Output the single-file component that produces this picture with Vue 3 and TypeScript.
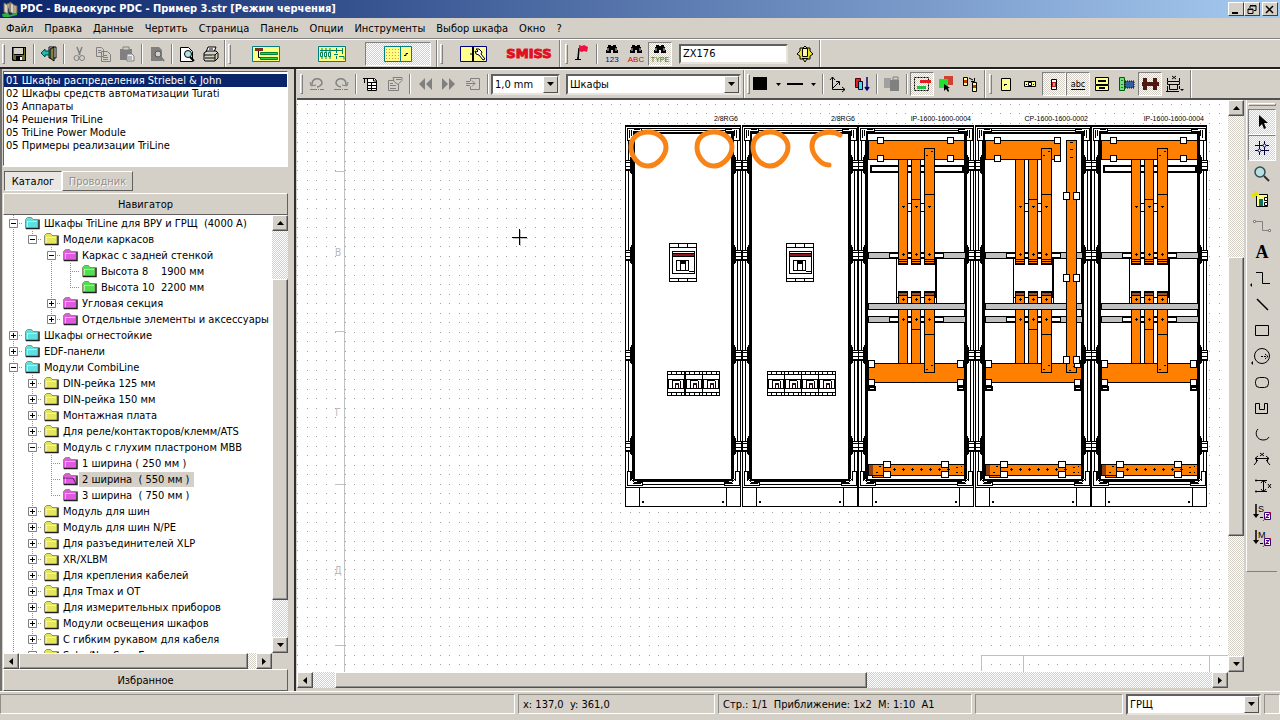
<script setup lang="ts">
import { ref } from 'vue'

interface Tool { id: string; label?: string; kind?: 'sep'; on?: boolean; off?: boolean; w?: number }
interface Node { text: string; guides: string; toggle?: string; color: string; open?: boolean; selected?: boolean }

const menus = ['Файл', 'Правка', 'Данные', 'Чертить', 'Страница', 'Панель', 'Опции', 'Инструменты', 'Выбор шкафа', 'Окно', '?']
const catalogs = [
  '01 Шкафы распределения Striebel & John',
  '02 Шкафы средств автоматизации Turati',
  '03 Аппараты',
  '04 Решения TriLine',
  '05 TriLine Power Module',
  '05 Примеры реализации TriLine',
]
const activeCatalog = ref(0)
const searchText = ref('ZX176')

const C = '#5fe0e0', Y = '#e6e65a', P = '#e05ae0', G = '#4fe04f'
const nodes: Node[] = [
  { text: 'Шкафы TriLine для ВРУ и ГРЩ  (4000 А)', guides: 'T', toggle: '-', color: C },
  { text: 'Модели каркасов', guides: 'IL', toggle: '-', color: Y },
  { text: 'Каркас с задней стенкой', guides: 'I T', toggle: '-', color: P },
  { text: 'Высота 8    1900 мм', guides: 'I IT', color: G },
  { text: 'Высота 10  2200 мм', guides: 'I IL', color: G },
  { text: 'Угловая секция', guides: 'I T', toggle: '+', color: P },
  { text: 'Отдельные элементы и аксессуары', guides: 'I L', toggle: '+', color: P },
  { text: 'Шкафы огнестойкие', guides: 'T', toggle: '+', color: C },
  { text: 'EDF-панели', guides: 'T', toggle: '+', color: C },
  { text: 'Модули CombiLine', guides: 'T', toggle: '-', color: C },
  { text: 'DIN-рейка 125 мм', guides: 'IT', toggle: '+', color: Y },
  { text: 'DIN-рейка 150 мм', guides: 'IT', toggle: '+', color: Y },
  { text: 'Монтажная плата', guides: 'IT', toggle: '+', color: Y },
  { text: 'Для реле/контакторов/клемм/ATS', guides: 'IT', toggle: '+', color: Y },
  { text: 'Модуль с глухим пластроном МВВ', guides: 'IT', toggle: '-', color: Y },
  { text: '1 ширина ( 250 мм )', guides: 'IIT', color: P },
  { text: '2 ширина  ( 550 мм )', guides: 'IIT', color: P, open: true, selected: true },
  { text: '3 ширина  ( 750 мм )', guides: 'IIL', color: P },
  { text: 'Модуль для шин', guides: 'IT', toggle: '+', color: Y },
  { text: 'Модуль для шин N/PE', guides: 'IT', toggle: '+', color: Y },
  { text: 'Для разъединителей XLP', guides: 'IT', toggle: '+', color: Y },
  { text: 'XR/XLBM', guides: 'IT', toggle: '+', color: Y },
  { text: 'Для крепления кабелей', guides: 'IT', toggle: '+', color: Y },
  { text: 'Для Tmax и OT', guides: 'IT', toggle: '+', color: Y },
  { text: 'Для измерительных приборов', guides: 'IT', toggle: '+', color: Y },
  { text: 'Модули освещения шкафов', guides: 'IT', toggle: '+', color: Y },
  { text: 'С гибким рукавом для кабеля', guides: 'IT', toggle: '+', color: Y },
  { text: 'Solar/NewSun, Europa', guides: 'IT', toggle: '+', color: Y },
]

const sep: Tool = { id: '', kind: 'sep' }
const fileTools: Tool[] = [
  { id: 'save', label: 'Сохранить' }, sep, { id: 'exit', label: 'Выход' }, sep,
  { id: 'cut', label: 'Вырезать', off: true }, { id: 'copy', label: 'Копировать', off: true }, { id: 'paste', label: 'Вставить', off: true }, sep,
  { id: 'find', label: 'Найти', off: true }, sep, { id: 'preview', label: 'Просмотр' }, { id: 'print', label: 'Печать' },
]
const modeTools: Tool[] = [
  { id: 'tree', label: 'Структура', w: 28 }, { id: 'scheme', label: 'Схема', w: 28 }, { id: 'layout', label: 'Компоновка', w: 28, on: true },
]
const findTools: Tool[] = [
  { id: 'flag', label: 'Флаг' }, sep,
  { id: 'f123', label: 'Поиск по номеру' }, { id: 'fabc', label: 'Поиск по тексту' }, { id: 'ftype', label: 'Поиск по типу', on: true },
]
const editTools: Tool[] = [
  { id: 'undo', label: 'Отменить', off: true }, { id: 'redo', label: 'Повторить', off: true }, sep,
  { id: 'newdoc', label: 'Новый лист' }, { id: 'props', label: 'Свойства', off: true }, sep,
  { id: 'prev', label: 'Назад', off: true }, { id: 'next', label: 'Вперёд', off: true }, { id: 'goto', label: 'Перейти', off: true },
]
const lineTools: Tool[] = [
  { id: 'axes', label: 'Оси' }, { id: 'order', label: 'Порядок' }, sep, { id: 'group', label: 'Группа', off: true }, sep,
  { id: 'select', label: 'Выделение', on: true }, { id: 'pick', label: 'Указать' }, { id: 'replace', label: 'Заменить' },
]
const viewTools: Tool[] = [
  { id: 'door', label: 'Дверь' }, { id: 'plate', label: 'Панель' }, { id: 'device', label: 'Аппарат', on: true }, { id: 'abc', label: 'Текст', on: true },
  { id: 'cover', label: 'Крышка' }, { id: 'section', label: 'Разрез' }, { id: 'bus', label: 'Шины', on: true }, { id: 'dims', label: 'Размеры' },
]
const drawTools: Tool[] = [
  { id: 'arrow', label: 'Выбор', on: true }, { id: 'grid', label: 'Сетка', on: true }, { id: 'zoom', label: 'Масштаб' }, { id: 'insert', label: 'Вставка' },
  { id: 'poly', label: 'Соединение', off: true }, { id: 'text', label: 'Текст' }, { id: 'step', label: 'Ломаная' }, { id: 'line', label: 'Линия' },
  { id: 'rect', label: 'Прямоугольник' }, { id: 'circle', label: 'Окружность' }, { id: 'round', label: 'Скругление' }, { id: 'ushape', label: 'Многоугольник' },
  { id: 'arc', label: 'Дуга' }, { id: 'dimh', label: 'Размер по X' }, { id: 'dimv', label: 'Размер по Y' }, { id: 'sortS', label: 'Уровень S' }, { id: 'sortM', label: 'Уровень M' },
]

const binocular = '<path d="M4 0h3v1h2V0h3v2h1v3h1v3H9V5H7v3H2V5h1V2h1z" fill="#000"/><path d="M4 3v3M12 3v3" stroke="#d4d0c8"/>'
const label = (t: string, c: string) => `<text x="8" y="17" font-size="8" text-anchor="middle" font-family="Liberation Sans" fill="${c}">${t}</text>`
const icons: Record<string, string> = {
  save: '<path d="M1 1h14v14H2l-1-1z" fill="#000"/><path d="M3 2h9v6H3z" fill="#d4d0c8"/><path d="M2 2h1v7h10V2h1v12h-3v-4H5v4H3l-1-1z" fill="#6e6c2c"/><path d="M9 11h2v3H9z" fill="#fff"/>',
  exit: '<path d="M8 1h7v11H8z" fill="#fff" stroke="#000"/><path d="M9 3l4-2v14l-4-3z" fill="#808040" stroke="#000"/><path d="M0 7l4-4v2h4v4H4v2z" fill="#20b8b0" stroke="#004848"/>',
  cut: '<path d="M6 1l3 8M11 1L8 9" stroke="#808080" fill="none" stroke-width="1.5"/><circle cx="5.500" cy="12" r="2.500" fill="none" stroke="#808080"/><circle cx="11" cy="12" r="2.500" fill="none" stroke="#808080"/>',
  copy: '<path d="M1.500 1.500h5l2 2v7h-7zM6.500 5.500h6l3 3v7h-9z" fill="#d4d0c8" stroke="#808080"/><path d="M3 4.500h3M3 6.500h3M8 9.500h4M8 11.500h5M8 13.500h5" stroke="#808080"/>',
  paste: '<path d="M1 3h12v11H1z" fill="#808080"/><path d="M4 1h6v3H4z" fill="#d4d0c8" stroke="#808080"/><path d="M8 8h5l2 2v5H8z" fill="#eee" stroke="#808080"/><path d="M9 11h4M9 13h4" stroke="#808080"/>',
  find: '<path d="M2 1h8l3 3v11H2z" fill="#808080"/><circle cx="9" cy="8" r="3" fill="#d4d0c8" stroke="#555"/><path d="M11 10l4 5" stroke="#777" stroke-width="2"/>',
  preview: '<path d="M1.500 1.500h8l4 4v10h-12z" fill="#fff" stroke="#000"/><circle cx="9" cy="8" r="3.500" fill="#b0e8e8" stroke="#000"/><path d="M11 11l4 4" stroke="#000" stroke-width="2"/>',
  print: '<path d="M5 1h8l-2 5H3z" fill="#fff" stroke="#000"/><path d="M1 7l3-2h9l2 2v5l-3 3H2l-1-1z" fill="#d4d0c8" stroke="#000"/><path d="M1 9h11l3-3M2 12h10M12 9v6M6 3h4" stroke="#000" fill="none"/><path d="M9 10h2" stroke="#e0d000"/>',
  tree: '<path d="M.5 .5h27v15H.5z" fill="#ffff80" stroke="#008080"/><path d="M3 2h8v3H3z" fill="#803020"/><path d="M6.500 5v6.500H9" stroke="#000" fill="none"/><path d="M8.500 6.500h17v2h-17zM8.500 11.500h17v2h-17z" fill="#30d040" stroke="#008030"/>',
  scheme: '<path d="M.5 .5h27v15H.5z" fill="#ffff80" stroke="#008080"/><path d="M2 4.500h22M4 2v11M8 2v11M12 2v11M16 8.500h4M18.500 2v5M18.500 10v3M24.500 2v6" stroke="#008060" fill="none"/><path d="M2.500 6.500h2v4h-2zM6.500 6.500h2v4h-2zM10.500 6.500h2v4h-2z" fill="#ffff80" stroke="#008060"/><path d="M21 10.500h5v3" stroke="#008060" fill="none"/>',
  layout: '<path d="M.5 .5h27v15H.5zM16.500 0v16" fill="#ffff80" stroke="#008080"/><path d="M2 3.500h13M2 6.500h13M2 9.500h13M2 12.500h13" stroke="#e09040" stroke-dasharray="1 2"/><path d="M20 9.500h2v-2h2" stroke="#000" fill="none"/>',
  wrench: '<path d="M.5 .5h26v15H.5z" fill="#ffff90" stroke="#000080"/><path d="M13 1v14" stroke="#000" stroke-width="2"/><path d="M16 3l3 0 3 3-1 2 4 5-2 1-4-5-3-1-1-3 2 1 1-1zM10 8h3" fill="#fff" stroke="#000"/>',
  flag: '<path d="M5 3L4 14" stroke="#000" stroke-width="1.500"/><path d="M1 14.500h6M3 13h2" stroke="#000"/><path d="M5 0l3 1 2-1 4 2-1 5-3-1-2 1-3-1z" fill="#f01040"/>',
  f123: binocular + label('123', '#0000c0'),
  fabc: binocular + label('ABC', '#e00000'),
  ftype: binocular + '<text x="8" y="17" font-size="7" text-anchor="middle" font-family="Liberation Sans" fill="#008000">TYPE</text>',
  lamp: '<path d="M8 0l2 2 3 0 0 3 3 3-3 2 0 3-3 0-2 3-2-3-3 0 0-3-3-2 3-3 0-3 3 0z" fill="#e8e030" stroke="#000"/><path d="M5.500 2.500h5v8h-5z" fill="#fff8a0" stroke="#000"/><path d="M5 12.500h6" stroke="#000"/>',
  undo: '<path d="M3 9c-1-8 10-8 10-2 0 2-3 4-5 4" fill="none" stroke="#808080" stroke-width="1.500"/><path d="M1 6l1 4 5-1" stroke="#808080" fill="none"/><path d="M1 13.500h14" stroke="#808080" stroke-dasharray="7 1 1 1"/>',
  redo: '<path d="M13 9c1-8-10-8-10-2 0 2 3 4 5 4" fill="none" stroke="#808080" stroke-width="1.500"/><path d="M15 6l-1 4-5-1" stroke="#808080" fill="none"/><path d="M1 13.500h14" stroke="#808080" stroke-dasharray="7 1 1 1"/>',
  newdoc: '<path d="M4.500 2.500h7l2 2v10h-9z" fill="#fff" stroke="#000"/><path d="M5 6.500h8M5 9.500h8M5 12.500h8M8.500 6v8M1.500 2v5M0 2.500h5M10.500 2v3h3" stroke="#000" fill="none"/>',
  props: '<path d="M1.500 4.500h10v10h-10z" fill="#d4d0c8" stroke="#808080"/><path d="M6 1.500h9v3l-4 4-4-3z" fill="#d4d0c8" stroke="#808080"/><path d="M3 7.500h3M3 9.500h6M3 12.500h6M9 3.500h5" stroke="#808080"/>',
  prev: '<path d="M8 2v12L2 8zM15 2v12L9 8z" fill="#808080"/>',
  next: '<path d="M1 2v12l6-6zM8 2v12l6-6z" fill="#808080"/>',
  goto: '<path d="M5.500 5V2.500h9v11h-9v-3" fill="none" stroke="#808080"/><path d="M1 7.500h9M7 4.500l3 3-3 3M1 5.500h4M1 9.500h4" fill="none" stroke="#808080"/>',
  axes: '<path d="M2.500 1v12.500H15M0 4l2.500-3L5 4M12 11l3 2.500-3 2.500M2 13L9 6M9.500 9V5.500H6" fill="none" stroke="#000"/>',
  order: '<path d="M1.500 2.500h5v9h-5z" fill="#e02020" stroke="#500"/><path d="M4.500 5.500h4v8h-4z" fill="#40e0e0" stroke="#003"/><path d="M13 1v12M11 11l2 3 2-3" stroke="#000080" fill="#000080" stroke-width="1.500"/>',
  group: '<path d="M0 2h7v10H0z" fill="#a0a0a0"/><path d="M6 4h9v11H6z" fill="#808080"/><path d="M9 1h5v3H9z" fill="#d4d0c8" stroke="#808080"/>',
  select: '<path d="M.5 1.500h14v13H.5z" fill="none" stroke="#000" stroke-dasharray="2 1"/><path d="M6 4h11v3H6z" fill="#e02020"/><path d="M3 10h9v3H3z" fill="#20c040"/>',
  pick: '<path d="M6 0h9v9H6z" fill="#d04030"/><path d="M1 3h9v9H1z" fill="#20e030"/><path d="M6 8v7l2-2 2 3 1-1-1-3h2z" fill="#000"/>',
  replace: '<path d="M1.500 1.500h4v8h-4z" fill="#ffffa0" stroke="#000"/><path d="M2 4h3v3H2z" fill="#c04000"/><path d="M10.500 6.500h4v9h-4z" fill="#ffffa0" stroke="#000"/><path d="M11 9h3v3h-3z" fill="#b04020"/><path d="M7 2l4 2M9 5.500h3.500V2" stroke="#000" fill="none"/>',
  door: '<path d="M3.500 2.500h9v12h-9z" fill="#ffff90" stroke="#000"/><path d="M6 8.500h3M6.500 8v2" stroke="#000"/>',
  plate: '<path d="M2.500 5.500h11v5h-11z" fill="#ffff90" stroke="#000"/><path d="M6.500 6.500h3v3h-3z" fill="#fff" stroke="#000"/><path d="M4 8.500h1M11 8.500h1" stroke="#000"/>',
  device: '<path d="M5.500 3.500h5v10h-5z" fill="#fff" stroke="#000"/><path d="M6 6h4v5H6z" fill="#c02010"/><path d="M8 7v3" stroke="#fff"/>',
  abc: '<text x="8" y="11" text-anchor="middle" font-size="9" font-family="DejaVu Sans Condensed, DejaVu Sans">abc</text><path d="M1 13.500h14" stroke="#000"/>',
  cover: '<path d="M1.500 1.500h13v7h-13zM1.500 9.500h13v5h-13z" fill="#ffff90" stroke="#000"/><path d="M4 5h8M5 12h6" stroke="#000" stroke-width="2"/>',
  section: '<path d="M1.500 1.500h5v13h-5z" fill="#70e080" stroke="#006000"/><path d="M4 4v1M4 8v1M4 11v1" stroke="#000"/><path d="M7 5h9v7H7z" fill="#3060a0" stroke="#000" stroke-dasharray="1 1"/>',
  bus: '<path d="M1 2h4v12H1zM11 2h4v12h-4zM0 6h17v4H0z" fill="#501810"/>',
  dims: '<path d="M1.500 5.500h12v3h-12zM3.500 8.500h8v5h-8z" fill="none" stroke="#000"/><path d="M0 15.500h13M6 0l4 3M10 0L6 3M1.500 2v3M13.500 2v3M1.500 10v6M13.500 10v3" stroke="#000"/><path d="M14 13h4l-2 2z"/>',
  arrow: '<path d="M5 1v12l3-3 2 5 2-1-2-5h4z" fill="#000"/>',
  grid: '<path d="M5.500 1v14M10.500 1v14M1 5.500h14M1 10.500h14" stroke="#000040"/><circle cx="10.500" cy="5.500" r="1.500" fill="#fff" stroke="#000080"/><circle cx="5.500" cy="10.500" r="1.500" fill="#fff" stroke="#000080"/>',
  zoom: '<circle cx="6" cy="6" r="5" fill="#b8e0e0" stroke="#305050" stroke-width="1.500"/><path d="M10 10l5 5" stroke="#303030" stroke-width="2"/>',
  insert: '<path d="M2.500 2.500h11v12h-11z" fill="#ffff90" stroke="#000"/><path d="M5 7h4v7H5z" fill="#107060"/><path d="M10.500 5.500h3v3h-3zM10.500 10.500h3v3h-3z" fill="#fff" stroke="#000"/><path d="M1 -1v7M-2 2.500h7M-2 -1l6 6M4 -1l-6 6" stroke="#e0e000"/>',
  poly: '<path d="M2 3.500h6.500v9H14" fill="none" stroke="#808080"/><path d="M-.5 2.500h2v2h-2zM14.500 11.500h2v2h-2z" fill="#fff" stroke="#808080"/>',
  text: '<text x="8" y="14" text-anchor="middle" font-size="18" font-weight="bold" font-family="Liberation Serif">A</text>',
  step: '<path d="M2 2.500h6.500v11H16" fill="none" stroke="#000"/><path d="M-4 15l2-2v4z"/>',
  line: '<path d="M3 3l11 11" stroke="#000" stroke-width="1.500"/>',
  rect: '<path d="M1.500 3.500h13v10h-13z" fill="none" stroke="#000"/>',
  circle: '<circle cx="8" cy="8" r="7.500" fill="none" stroke="#000"/><path d="M7 8.500h7M11 6l3 2.500-3 2.500" fill="none" stroke="#000" stroke-dasharray="2 1"/><path d="M-3 15l2-2v4z"/>',
  round: '<rect x="1.500" y="3.500" width="13" height="10" rx="4" fill="none" stroke="#000"/>',
  ushape: '<path d="M1.500 3.500h4v6h5v-6h3v10h-12z" fill="none" stroke="#000"/>',
  arc: '<path d="M4 3c-4 4-1 11 5 11 3 0 5-1 6-3" fill="none" stroke="#000"/>',
  dimh: '<path d="M1 6.500h14M2.500 6v4L0 13M13.500 6v4L16 13M4 4L1 6.500 4 9M12 4l3 2.500L12 9M6 1l4 3M10 1L6 4" fill="none" stroke="#000"/>',
  dimv: '<path d="M2 2.500h11M2 13.500h11M9.500 2v12M7 5l2.500-3L12 5M7 11l2.500 3 2.500-3M14 6l3 4M17 6l-3 4" fill="none" stroke="#000"/><circle cx="2" cy="2.500" r="1"/><circle cx="2" cy="13.500" r="1"/>',
  sortS: '<path d="M2 0v11" stroke="#000" stroke-width="1.500"/><path d="M-1 10h6l-3 4zM6 13h3v1H6z"/><text x="4" y="8" font-size="9" font-family="Liberation Sans">S</text><path d="M10.500 8.500h6v7h-6z" fill="#fff" stroke="#400080"/><path d="M9 17L17 8" stroke="#e02020"/><path d="M12 10.500h3l-3 3h3" stroke="#400080" fill="none"/>',
  sortM: '<path d="M2 0v11" stroke="#000" stroke-width="1.500"/><path d="M-1 10h6l-3 4zM6 13h3v1H6z"/><text x="4" y="8" font-size="9" font-family="Liberation Sans">M</text><path d="M10.500 8.500h6v7h-6z" fill="#fff" stroke="#400080"/><path d="M9 17L17 8" stroke="#e02020"/><path d="M12 10.500h3l-3 3h3" stroke="#400080" fill="none"/>',
}

interface Cabinet { x: number; code: string; kind: 'breakers' | 'bus'; modules?: number[]; extra?: boolean }
const cabinets: Cabinet[] = [
  { x: 625, code: '2/8RG6', kind: 'breakers', modules: [42, 60, 77] },
  { x: 742, code: '2/8RG6', kind: 'breakers', modules: [25, 42, 59, 76] },
  { x: 858, code: 'IP-1600-1600-0004', kind: 'bus' },
  { x: 975, code: 'CP-1600-1600-0002', kind: 'bus', extra: true },
  { x: 1091, code: 'IP-1600-1600-0004', kind: 'bus' },
]
const clampRows = [157, 247, 347, 438]
const bars = [{ x: 40, top: 159, bottom: 363, w: 10 }, { x: 53, top: 159, bottom: 363, w: 10 }, { x: 66, top: 148, bottom: 372, w: 11 }]
const sheetRows = [{ y: 252, t: 'В' }, { y: 412, t: 'Г' }, { y: 570, t: 'Д' }]

const gridStep = 9.5
const gridDots = Array.from({ length: 64 }, (_, row) =>
  Array.from({ length: 160 }, (_, col) => `M${Math.round(297.3 + col * gridStep)} ${Math.round(103.6 + row * gridStep)}h1v1h-1z`).join('')
).join('')
</script>

<template>
  <div class="window">
    <header class="title">
      <svg class="logo" width="16" height="16" viewBox="0 0 16 16" aria-hidden="true">
        <path d="M2 2l4 2v9l-4-2zM8 1l4 3v9l-4-2z" fill="#d8d0c0" stroke="#706850" /><path d="M5 3l3-1v9M12 4l3 1v7l-3 1" fill="#b8a888" stroke="#706850" /><path d="M0 13l5-1 3 2 7-2v2l-8 2H1z" fill="#30b040" />
      </svg>
      <h1>PDC - Видеокурс PDC - Пример 3.str [Режим черчения]</h1>
      <div class="win-buttons">
        <button aria-label="Свернуть"><svg width="10" height="9"><path d="M1 7h6v2H1z" /></svg></button>
        <button aria-label="Восстановить"><svg width="10" height="9"><path d="M3 1h6M3 0.500h6v5H7M3 1v2M1 4h5v4.500H1zM1 4.500h5" fill="none" stroke="#000" /></svg></button>
        <button class="close" aria-label="Закрыть"><svg width="10" height="9"><path d="M1 1l7 7M8 1L1 8" stroke="#000" stroke-width="1.500" /></svg></button>
      </div>
    </header>

    <nav class="menu"><button v-for="m in menus" :key="m">{{ m }}</button></nav>

    <div class="toolbar">
      <div class="band file-band">
        <i class="grip"></i>
        <template v-for="(t, i) in fileTools" :key="i">
          <i v-if="t.kind" class="sep"></i>
          <button v-else class="tool" :class="{ on: t.on }" :disabled="t.off" :aria-label="t.label"><svg width="16" height="16" v-html="icons[t.id]" /></button>
        </template>
      </div>
      <div class="band mode-band">
        <i class="grip"></i>
        <button v-for="t in modeTools" :key="t.id" class="tool mode" :class="{ on: t.on }" :aria-label="t.label"><svg width="28" height="16" v-html="icons[t.id]" /></button>
      </div>
      <div class="band smiss-band">
        <i class="grip"></i>
        <button class="tool wide" aria-label="Настройка"><svg width="27" height="16" v-html="icons.wrench" /></button>
        <button class="tool wide smiss">SMISS</button>
      </div>
      <div class="band find-band">
        <i class="grip"></i>
        <template v-for="(t, i) in findTools" :key="i">
          <i v-if="t.kind" class="sep"></i>
          <button v-else class="tool" :class="{ on: t.on }" :aria-label="t.label"><svg width="16" height="18" v-html="icons[t.id]" /></button>
        </template>
        <input v-model="searchText" class="search" aria-label="Поиск">
        <button class="tool" aria-label="Искать"><svg width="16" height="16" v-html="icons.lamp" /></button>
      </div>
    </div>

    <main class="work">
      <aside class="side">
        <ul class="catalogs">
          <li v-for="(c, i) in catalogs" :key="c"><button :class="{ active: i === activeCatalog }" @click="activeCatalog = i">{{ c }}</button></li>
        </ul>
        <div class="tabs"><button class="current">Каталог</button><button disabled>Проводник</button></div>
        <button class="heading">Навигатор</button>
        <div class="tree-area">
          <ul class="tree">
            <li v-for="n in nodes" :key="n.text" :class="{ selected: n.selected }">
              <i v-for="(g, i) in n.guides.split('')" :key="i" class="guide" :class="{ full: g === 'I' || g === 'T', half: g === 'L', arm: g === 'T' || g === 'L' }">
                <button v-if="n.toggle && i === n.guides.length - 1" class="toggle" aria-label="Развернуть">
                  <svg width="9" height="9"><path d="M.5 .5h8v8h-8z" fill="#fff" stroke="#808080" /><path :d="n.toggle === '+' ? 'M2 4.500h5M4.500 2v5' : 'M2 4.500h5'" stroke="#000" /></svg>
                </button>
              </i>
              <svg class="folder" width="16" height="14" aria-hidden="true">
                <path d="M1.500 12.500v-9l2-2h4l1.500 2h5v9z" :fill="n.color" stroke="#909070" /><path d="M3 5.500h10M3.500 5v6" stroke="#fff" opacity=".5" fill="none" /><path d="M2 12.500h13v-9" stroke="#202020" fill="none" stroke-width="1.500" />
                <path v-if="n.open" d="M1 6h10l3 6" stroke="#502050" fill="none" />
              </svg>
              <span>{{ n.text }}</span>
            </li>
          </ul>
          <div class="vscroll side-v">
            <button aria-label="Вверх"><svg width="7" height="4"><path d="M3.500 0L7 4H0z" /></svg></button>
            <i class="before"></i><i class="thumb"></i><i class="after"></i>
            <button aria-label="Вниз"><svg width="7" height="4"><path d="M0 0h7L3.500 4z" /></svg></button>
          </div>
        </div>
        <div class="hscroll side-h">
          <button aria-label="Влево"><svg width="4" height="7"><path d="M4 0v7L0 3.500z" /></svg></button>
          <i class="thumb"></i><i class="after"></i>
          <button aria-label="Вправо"><svg width="4" height="7"><path d="M0 0l4 3.500L0 7z" /></svg></button>
          <i class="corner"></i>
        </div>
        <button class="heading favourites">Избранное</button>
      </aside>

      <section class="editor">
        <div class="toolbar format">
          <div class="band">
            <i class="grip"></i>
            <template v-for="(t, i) in editTools" :key="i">
              <i v-if="t.kind" class="sep"></i>
              <button v-else class="tool" :disabled="t.off" :aria-label="t.label"><svg width="16" height="16" v-html="icons[t.id]" /></button>
            </template>
            <i class="sep"></i>
            <span class="combo width-combo"><select aria-label="Толщина линии"><option>1,0 mm</option></select><i><svg width="7" height="4"><path d="M0 0h7L3.500 4z" /></svg></i></span>
            <span class="combo layer-combo"><select aria-label="Слой"><option>Шкафы</option></select><i><svg width="7" height="4"><path d="M0 0h7L3.500 4z" /></svg></i></span>
          </div>
          <div class="band">
            <i class="grip"></i>
            <button class="tool swatch" aria-label="Цвет"><svg width="32" height="14"><path d="M0 0h14v13H0zM23 6h5l-2.500 3z" /></svg></button>
            <button class="tool swatch" aria-label="Тип линии"><svg width="32" height="14"><path d="M0 6h16v2H0zM24 6h5l-2.500 3z" /></svg></button>
            <i class="sep"></i>
            <template v-for="(t, i) in lineTools" :key="i">
              <i v-if="t.kind" class="sep"></i>
              <button v-else class="tool" :class="{ on: t.on }" :disabled="t.off" :aria-label="t.label"><svg width="16" height="16" v-html="icons[t.id]" /></button>
            </template>
          </div>
          <div class="band view-band">
            <i class="grip"></i>
            <button v-for="t in viewTools" :key="t.id" class="tool" :class="{ on: t.on }" :aria-label="t.label"><svg width="16" height="16" v-html="icons[t.id]" /></button>
          </div>
        </div>

        <div class="editor-body">
          <div class="canvas-col">
            <div class="canvas-row">
              <svg class="canvas" role="img" aria-label="Чертёж шкафов">
                <g transform="translate(-297 -100)">
                  <path :d="gridDots" fill="#a0a0a0" shape-rendering="crispEdges" />
                  <path d="M344.500 100v3000M335 171.500h9M335 331.500h9M335 484.500h9M335 645.500h9" stroke="#c0c0c0" fill="none" />
                  <g fill="#b8b8b8" font-size="10" text-anchor="middle"><text v-for="r in sheetRows" :key="r.t" x="338" :y="r.y + 4">{{ r.t }}</text></g>
                  <path d="M981.500 671v-15.500h247M1023.500 656v16M1209.500 656v16" stroke="#c0c0c0" fill="none" />

                  <g v-for="c in cabinets" :key="c.x">
                    <text :x="c.x + 113" y="121" font-size="7" text-anchor="end" font-family="Liberation Sans" class="code">{{ c.code }}</text>
                    <g :transform="`translate(${c.x} 0)`" fill="none" stroke="#000" shape-rendering="crispEdges">
                      <path d="M.5 125.500h115v381H.5z" fill="#fff" />
                      <path d="M0 126h116M8 133h100" stroke-width="2" />
                      <path d="M3 128.500h110M12 130.500h92M.5 487.500h115M12 481.500h92M3 484.500h110M3.500 128v356M112.500 128v356" />
                      <path d="M8.500 133v346M107.500 133v346" stroke-width="3" />
                      <path d="M8 479.500h100" stroke-width="2" />
                      <path d="M2 140v-12h14v3h-8v9zM114 140v-12h-14v3h8v9zM2 471v14h15v-3H9l-3-3v-8zM114 471v14H99v-3h8l3-3v-8z" fill="#fff" />
                      <path d="M4.500 130v8M6.500 130v6M9 129.500h6M111.500 130v8M109.500 130v6M107 129.500h-6M5.500 472v9M8 483.500h8M110.500 472v9M108 483.500h-8" />
                      <g v-for="y in clampRows" :key="y" :transform="`translate(0 ${y})`">
                        <path d="M0 3h8v10H0zM108 3h8v10h-8z" fill="#fff" /><path d="M0 3.500h8M0 5.500h9M0 9.500h9M0 12.500h8M6.500 -2v4M6.500 13v4M116 3.500h-8M116 5.500h-9M116 9.500h-9M116 12.500h-8M109.500 -2v4M109.500 13v4M5.500 0v16M110.500 0v16" />
                        <path d="M7.500 2v13M108.500 2v13" stroke-width="3" />
                      </g>
                      <path d="M14.500 487v19M101.500 487v19" /><path d="M17 501h2v2h-2zM97 501h2v2h-2z" fill="#000" stroke="none" />

                      <template v-if="c.kind === 'breakers'">
                        <g transform="translate(44 243)">
                          <path d="M.5 .5h27v38H.5zM0 4.500h28M0 35.500h28M3.500 8.500h22v22h-22zM7.500 17.500h12v10h-12zM11.500 18.500h5v9h-5zM9.500 0v4M18.500 0v4M9.500 35v4M18.500 35v4M20 28.500h5M25 20v11" fill="#fff" />
                          <path d="M4 12h21" stroke="#901818" stroke-width="2" /><path d="M4 10.500h21M4 13.500h21" /><path d="M12 19.500h4" stroke-width="2" />
                        </g>
                        <g v-for="(m, i) in c.modules" :key="m" :transform="`translate(${m} 371)`">
                          <path d="M.5 .5h17v24H.5zM0 3.500h18M0 8.500h18M0 17.500h18M0 21.500h18M4.500 0v3M9.500 0v3M14.500 0v3M4.500 22v3M9.500 22v3M14.500 22v3" fill="#fff" />
                          <path d="M1.500 9v8M16.500 9v8M5.500 9v8M8.500 12v5h3v-5M13.500 10v7M5 9.500h8" /><path d="M8 12.500h4" stroke-width="2" stroke="#301010" /><path v-if="i" d="M0 8v10" stroke-width="2" />
                        </g>
                      </template>

                      <template v-else>
                        <g fill="#c0c0c0"><path d="M10.500 252.500h97v6h-97zM10.500 316.500h97v6h-97z" /></g>
                        <g fill="#fff"><path d="M31 253.500h54v4H31zM31 317.500h54v4H31zM38.500 258.500h40v39h-40zM38.500 297.500v6M78.500 297.500v6M45.500 203.500h26v8h-26z" /><path d="M78 258v40" stroke-width="2" /></g>
                        <rect v-if="!c.extra" x="13" y="166" width="92" height="6" fill="#fff" stroke-width="2" />
                        <g fill="#ff8000">
                          <path :d="`M10.500 140.500H${c.extra ? 85 : 106}v19H10.500z`" />
                          <path d="M10.500 363.500h96v19h-96zM10.500 464.500h96v11h-96zM14.500 464.500h11v13h-11z" />
                          <template v-for="b in bars" :key="b.x">
                            <rect :x="b.x + 0.5" :y="b.top + 0.5" :width="b.w - 1" :height="264 - b.top" />
                            <rect :x="b.x + 0.5" y="291.500" :width="b.w - 1" :height="b.bottom - 291" />
                            <path :d="`M${b.x} 259.500h${b.w}M${b.x} 261.500h${b.w}M${b.x} 263.500h${b.w}`" />
                            <rect :x="b.x + 0.5" y="292.500" :width="b.w - 1" height="3" fill="#a05020" />
                            <path :d="`M${b.x + 4} 206.500h3M${b.x + 5.5} 206v2M${b.x + 4} 254.500h3M${b.x + 5.5} 253v3M${b.x + 4} 299.500h3M${b.x + 5.5} 298v3M${b.x + 4} 319.500h3M${b.x + 5.5} 318v3`" />
                          </template>
                          <path d="M53 199.500h10M66 194.500h11M53 329.500h10M66 334.500h11M68 155.500h2M73 151.500h2M68 369.500h2M73 365.500h2" />
                          <path v-if="c.extra" d="M91.500 140.500h10v232h-10zM95 142.500h3M95 149.500h3M95 157.500h3M94 370.500h2M98 366.500h2" />
                        </g>
                        <path d="M10.500 303.500h97v6h-97z" fill="#c0c0c0" />
                        <rect v-if="c.extra" x="91.500" y="299.500" width="10" height="24" fill="#ff8000" stroke="none" /><path v-if="c.extra" d="M91.500 299v25M101.500 299v25" />
                        <path d="M11 465h4v10h-4z" fill="#904010" stroke="none" />
                        <path v-for="k in 7" :key="k" :d="`M${26 + k * 9} 469.500h3M${27.5 + k * 9} 468v3`" />
                        <path d="M18 472.500h2M21 466.500h2M98 467.500h2M103 466.500h1M103 472.500h1M98 472.500h2" />
                        <g fill="#fff">
                          <path d="M19.500 137.500h6v6h-6zM19.500 155.500h6v6h-6z" />
                          <path :transform="`translate(${c.extra ? 79 : 89} 0)`" d="M.5 137.500h6v6H.5zM.5 155.500h6v6H.5z" />
                          <path d="M10.500 360.500h6v7h-6zM99.500 360.500h6v7h-6zM10.500 379.500h6v6h-6zM99.500 379.500h6v6h-6zM25.500 461.500h7v6h-7zM25.500 471.500h7v6h-7zM83.500 461.500h7v6h-7zM83.500 471.500h7v6h-7z" />
                          <path d="M11 387h6v3h-6zM100 387h6v3h-6z" stroke-width="2" />
                          <path v-if="c.extra" d="M88.500 192.500h6v7h-6zM98.500 192.500h6v7h-6zM88.500 274.500h6v7h-6zM98.500 274.500h6v7h-6zM88.500 356.500h6v7h-6zM98.500 356.500h6v7h-6z" />
                        </g>
                      </template>
                    </g>
                  </g>

                  <g fill="none" stroke="#f88418" stroke-width="5" stroke-linecap="round">
                    <path v-for="x in [648, 714, 770]" :key="x" :d="`M${x} 132c10 0 18 7 18 15s-8 19-18 19-17-10-17-19 7-15 17-15z`" />
                    <path d="M840 135c-8-5-28-4-28 11 0 9 9 19 17 19" />
                  </g>
                  <path d="M512 237.500h15M519.500 229v16" stroke="#000" /><path d="M513 238.500h15M520.500 230v16" stroke="#000" opacity=".25" />
                </g>
              </svg>
              <div class="vscroll canvas-v">
                <button aria-label="Вверх"><svg width="7" height="4"><path d="M3.500 0L7 4H0z" /></svg></button>
                <i class="before"></i><i class="thumb"></i><i class="after"></i>
                <button aria-label="Вниз"><svg width="7" height="4"><path d="M0 0h7L3.500 4z" /></svg></button>
              </div>
            </div>
            <div class="hscroll canvas-h">
              <button aria-label="Влево"><svg width="4" height="7"><path d="M4 0v7L0 3.500z" /></svg></button>
              <i class="before"></i><i class="thumb"></i><i class="after"></i>
              <button aria-label="Вправо"><svg width="4" height="7"><path d="M0 0l4 3.500L0 7z" /></svg></button>
              <i class="corner"></i>
            </div>
          </div>
          <div class="palette">
            <div class="palette-tools">
              <i class="hgrip"></i>
              <button v-for="t in drawTools" :key="t.id" class="tool" :class="{ on: t.on }" :disabled="t.off" :aria-label="t.label"><svg width="16" height="16" v-html="icons[t.id]" /></button>
            </div>
          </div>
        </div>
      </section>
    </main>

    <footer class="status">
      <span class="cell grow"></span>
      <span class="cell coords">x: 137,0&nbsp; y: 361,0</span>
      <span class="cell page">Стр.: 1/1&nbsp; Приближение: 1x2&nbsp; М: 1:10&nbsp; A1</span>
      <span class="cell blank"></span>
      <span class="combo object-combo"><select aria-label="Щит"><option>ГРЩ</option></select><i><svg width="7" height="4"><path d="M0 0h7L3.500 4z" /></svg></i></span>
      <span class="cell tail"></span>
    </footer>
  </div>
</template>

<style>
html, body { margin: 0; background: #d4d0c8; }
</style>

<style scoped>
.window { height: 100vh; min-height: 480px; display: flex; flex-direction: column; background: #d4d0c8; color: #000; font: 11px/13px "DejaVu Sans Condensed", "DejaVu Sans", sans-serif; overflow: hidden; }
.window * { box-sizing: border-box; }
button, input, select { font: inherit; color: inherit; margin: 0; padding: 0; border: 0; background: none; border-radius: 0; }
button { display: flex; align-items: center; justify-content: center; }
svg { display: block; overflow: visible; flex: none; }
ul { list-style: none; margin: 0; padding: 0; }

.title { flex: none; height: 18px; display: flex; align-items: center; padding: 0 2px; background: linear-gradient(90deg, #0a246a, #a6caf0); }
.title h1 { flex: 1; margin: 0; padding-left: 2px; color: #fff; font: bold 11px/16px "DejaVu Sans Condensed", "DejaVu Sans", sans-serif; white-space: nowrap; }
.win-buttons { display: flex; }
.win-buttons button { width: 16px; height: 14px; background: #d4d0c8; border: 1px solid; border-color: #fff #404040 #404040 #fff; }
.win-buttons .close { margin-left: 2px; }

.menu { flex: none; height: 21px; display: flex; align-items: center; border-bottom: 1px solid #808080; padding-left: 6px; gap: 11px; }
.toolbar { flex: none; display: flex; height: 30px; border-top: 1px solid #fff; border-bottom: 2px solid #202020; }
.band { flex: none; display: flex; align-items: center; border-right: 1px solid #808080; box-shadow: 1px 0 #fff; padding: 0 2px 0 3px; }
.grip { width: 3px; height: 20px; border: 1px solid; border-color: #fff #808080 #808080 #fff; margin-right: 2px; flex: none; }
.sep { width: 2px; height: 20px; margin: 0 2px; border-left: 1px solid #808080; border-right: 1px solid #fff; flex: none; }
.tool { width: 24px; height: 24px; flex: none; }
.tool.on { border: 1px solid; border-color: #808080 #fff #fff #808080; background: repeating-conic-gradient(#fff 0 25%, #d4d0c8 0 50%) 0 0 / 2px 2px; }
.tool.mode { width: 66px; }
.tool.wide { width: 56px; }
.tool.smiss { color: #e01020; font: bold 13px/20px "DejaVu Sans", sans-serif; -webkit-text-stroke: 1px #e01020; }
.file-band { padding: 0 1px 0 2px; }
.mode-band { padding-right: 5px; }
.find-band { padding-left: 5px; }
.search { width: 109px; height: 20px; margin: 0 5px 0 7px; padding: 0 2px; background: #fff; border: 2px solid; border-color: #606060 #e8e4dc #e8e4dc #606060; }

.work { flex: 1; min-height: 0; display: flex; }
.side { flex: none; width: 288px; margin-right: 6px; display: flex; flex-direction: column; border-left: 2px solid #707070; padding-left: 1px; }
.catalogs { flex: none; height: 95px; margin-top: 2px; padding-top: 2px; background: #fff; border: 1px solid; border-color: #606060 #fff #fff #606060; }
.catalogs button { width: 100%; height: 13px; padding-left: 2px; justify-content: flex-start; white-space: pre; }
.catalogs .active { background: #0a246a; color: #fff; }
.tabs { flex: none; display: flex; height: 27px; padding: 4px 1px 2px; border-top: 1px solid #fff; }
.tabs button { width: 71px; height: 20px; border: 1px solid; border-color: #fff #606060 #606060 #fff; }
.tabs .current { width: 58px; border-color: #606060 #fff #fff #606060; background: #e9e7e3; }
.tabs button:disabled { color: #909090; text-shadow: 1px 1px #fff; }
.heading { flex: none; height: 22px; background: #d4d0c8; border: 1px solid; border-color: #fff #606060 #606060 #fff; }
.tree-area { flex: 1; min-height: 0; display: flex; background: #fff; }
.tree { flex: 1; min-width: 0; overflow: hidden; padding-left: 1px; }
.tree li { height: 16px; display: flex; align-items: center; white-space: pre; }
.tree span { padding: 1px 5px 1px 3px; margin-left: 1px; }
.tree .selected span { background: #d4d0c8; }
.folder { margin-left: 1px; }
.guide { width: 19px; height: 16px; flex: none; display: flex; align-items: center; justify-content: center; background-repeat: no-repeat; }
.guide.full { background-image: repeating-linear-gradient(180deg, #909090 0 1px, transparent 1px 2px); background-size: 1px 16px; background-position: 9px 0; }
.guide.half { background-image: repeating-linear-gradient(180deg, #909090 0 1px, transparent 1px 2px); background-size: 1px 8px; background-position: 9px 0; }
.guide.arm.full { background-image: repeating-linear-gradient(180deg, #909090 0 1px, transparent 1px 2px), repeating-linear-gradient(90deg, #909090 0 1px, transparent 1px 2px); background-size: 1px 16px, 10px 1px; background-position: 9px 0, 9px 8px; }
.guide.arm.half { background-image: repeating-linear-gradient(180deg, #909090 0 1px, transparent 1px 2px), repeating-linear-gradient(90deg, #909090 0 1px, transparent 1px 2px); background-size: 1px 8px, 10px 1px; background-position: 9px 0, 9px 8px; }
.toggle { width: 9px; height: 9px; }

.vscroll, .hscroll { flex: none; display: flex; background: repeating-conic-gradient(#fff 0 25%, #d4d0c8 0 50%) 0 0 / 2px 2px; }
.vscroll { width: 16px; flex-direction: column; }
.hscroll { height: 16px; }
.vscroll button, .hscroll button, .thumb { flex: none; width: 16px; height: 16px; background: #d4d0c8; border: 1px solid; border-color: #fff #505050 #505050 #fff; box-shadow: inset -1px -1px #909090; }
.vscroll .thumb, .hscroll .thumb { width: auto; height: auto; }
.corner { width: 16px; background: #d4d0c8; }
.side-v .before { flex: 48; } .side-v .thumb { flex: 321; } .side-v .after { flex: 37; }
.side-h .thumb { flex: 229; } .side-h .after { flex: 8; }
.canvas-v .before { flex: 141; } .canvas-v .thumb { flex: 278; } .canvas-v .after { flex: 120; }
.canvas-h .before { flex: 22; } .canvas-h .thumb { flex: 531; } .canvas-h .after { flex: 346; }

.editor { flex: 1; min-width: 0; display: flex; flex-direction: column; border-left: 2px solid #303030; padding: 0 0 3px 1px; }
.format { height: 31px; border-bottom: 2px solid #505050; }
.combo { display: flex; background: #fff; border: 2px solid; border-color: #606060 #e8e4dc #e8e4dc #606060; height: 21px; flex: none; }
.combo select { flex: 1; min-width: 0; appearance: none; padding: 0 2px; outline: 0; }
.combo i { width: 15px; display: flex; align-items: center; justify-content: center; background: #d4d0c8; border: 1px solid; border-color: #fff #505050 #505050 #fff; }
.width-combo { width: 69px; }
.layer-combo { width: 175px; margin-left: 6px; }
.swatch { width: 34px; }
.view-band { padding: 0 4px; }
.editor-body { flex: 1; min-height: 0; display: flex; }
.canvas-col { flex: 1; min-width: 0; display: flex; flex-direction: column; }
.canvas-row { flex: 1; min-height: 0; display: flex; }
.canvas { flex: 1; min-width: 0; height: 100%; overflow: hidden; background: #fff; }
.code { fill: #000; }
.palette { flex: none; width: 36px; padding: 0 3px 0 2px; }
.palette-tools { display: flex; flex-direction: column; align-items: center; border-left: 1px solid #fff; border-bottom: 1px solid #808080; padding-bottom: 20px; }
.palette .tool { width: 28px; height: 26px; }
.hgrip { width: 28px; height: 3px; margin: 3px 0; border: 1px solid; border-color: #fff #808080 #808080 #fff; }

.status { flex: none; height: 29px; padding: 2px 0 6px; display: flex; align-items: center; gap: 3px; border-top: 1px solid #fff; }
.cell { flex: none; height: 20px; padding: 3px 4px 0; border: 1px solid; border-color: #909088 #fff #fff #909088; white-space: nowrap; overflow: hidden; }
.cell.grow { flex: 1; }
.cell.coords { width: 197px; }
.cell.page { width: 254px; }
.cell.blank { width: 148px; }
.object-combo { width: 135px; }
.cell.tail { width: 16px; }
</style>
